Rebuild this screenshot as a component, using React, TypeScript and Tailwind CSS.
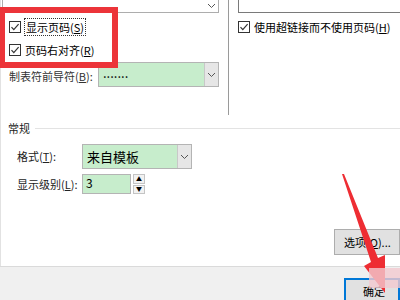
import React from 'react';

const font = { fontFamily: '"Microsoft YaHei UI", "Noto Sans CJK SC", "Noto Sans", sans-serif' };

function Check() {
  return (
    <svg width="12" height="12" viewBox="0 0 12 12" className="shrink-0">
      <rect x="0.5" y="0.5" width="11" height="11" fill="#fff" stroke="#333" />
      <path d="M2.5 6.2 L4.8 8.6 L9.6 3.2" fill="none" stroke="#333" strokeWidth="1.2" />
    </svg>
  );
}

function Chevron() {
  return (
    <svg width="9" height="6" viewBox="0 0 9 6">
      <path d="M1 1 L4.5 4.5 L8 1" fill="none" stroke="#555" strokeWidth="1" />
    </svg>
  );
}

function GreenCombo({ width, text, small }: { width: string; text: string; small?: boolean }) {
  return (
    <div className={`flex h-[25px] border border-[#b4b4b4] bg-[#c7edcc] ${width}`}>
      <div className={`flex flex-1 items-center whitespace-nowrap pl-[4px] text-[13px] text-black ${small ? 'pb-[4px]' : ''}`}>{text}</div>
      <div className="flex w-[14px] items-center justify-center border-l border-[#c8c8c8] bg-[#e6e6e6]">
        <Chevron />
      </div>
    </div>
  );
}

export default function App() {
  return (
    <div className="relative h-[300px] w-[400px] overflow-hidden whitespace-nowrap bg-white text-[11px] text-black" style={font}>
      <div className="flex h-[266px] flex-col border-l border-[#e2e2e2]">
        {/* top panes */}
        <div className="flex h-[115px]">
          <div className="flex w-[228px] shrink-0 flex-col border-r border-[#9a9a9a] pl-[1px]">
            <div className="flex h-[13px] w-[217px] justify-end border-x border-b border-[#adadad]">
              <div className="flex w-[14px] items-start justify-center pt-[3px]">
                <Chevron />
              </div>
            </div>
            <div className="mt-[4px] flex h-[19px] items-center gap-[3px] pl-[7px]">
              <Check />
              <span className="border border-dotted border-[#333] px-[1px] leading-[16px]">
                显示页码(<span className="underline">S</span>)
              </span>
            </div>
            <div className="mt-[4px] flex h-[19px] items-center gap-[4px] pl-[7px]">
              <Check />
              <span className="leading-[16px]">
                页码右对齐(<span className="underline">R</span>)
              </span>
            </div>
            <div className="mt-[3px] flex items-center pl-[7px]">
              <span className="w-[89px] pt-[3px] text-[#333]">
                制表符前导符(<span className="underline">B</span>):
              </span>
              <GreenCombo width="w-[121px]" text="......." small />
            </div>
          </div>
          <div className="flex flex-1 flex-col pl-[9px]">
            <div className="h-[13px] border-b border-l border-[#7a7a7a]" />
            <div className="mt-[8px] flex h-[12px] items-center gap-[4px]">
              <Check />
              <span className="leading-[14px]">
                使用超链接而不使用页码(<span className="underline">H</span>)
              </span>
            </div>
          </div>
        </div>

        {/* 常规 group */}
        <div className="mt-[3px] flex h-[20px] items-center pl-[7px]">
          <span className="text-[#222]">常规</span>
          <div className="ml-[5px] h-px flex-1 bg-[#e3e3e3]" />
        </div>
        <div className="mt-[6px] flex items-center pl-[16px]">
          <span className="w-[65px] text-[#222]">
            格式(<span className="underline">T</span>):
          </span>
          <GreenCombo width="w-[110px]" text="来自模板" />
        </div>
        <div className="mt-[5px] flex items-center pl-[16px]">
          <span className="w-[65px] text-[#222]">
            显示级别(<span className="underline">L</span>):
          </span>
          <div className="flex h-[20px] gap-[2px]">
            <div className="w-[49px] border border-[#b4b4b4] bg-[#c7edcc] pl-[3px] text-[12px] leading-[16px]">3</div>
            <div className="flex w-[12px] flex-col gap-px">
              <div className="flex flex-1 items-center justify-center border border-[#c4c4c4] bg-[#f2f2f2] text-[6px] leading-none">▲</div>
              <div className="flex flex-1 items-center justify-center border border-[#c4c4c4] bg-[#f2f2f2] text-[6px] leading-none">▼</div>
            </div>
          </div>
        </div>

        <div className="mt-[35px] flex justify-end">
          <div className="flex h-[26px] w-[66px] items-center border border-[#adadad] bg-[#e1e1e1] pl-[9px]">
            选项(<span className="underline">O</span>)...
          </div>
        </div>
      </div>

      {/* bottom bar */}
      <div className="flex h-[34px] justify-end border-t border-[#dadada] bg-[#f0f0f0] pt-[11px]">
        <div className="flex h-[24px] w-[56px] items-start border-2 border-[#0078d7] bg-[#e1e1e1] pl-[17px] pt-[3px]">
          确定
        </div>
      </div>

      {/* annotations */}
      <div className="absolute left-[-1px] top-[7px] h-[61px] w-[119px] border-[6px] border-[#ec3439]" />
      <svg className="absolute left-0 top-0" width="400" height="300" viewBox="0 0 400 300">
        <polygon points="342,174 344,174 378,258 385,255 385,293 364,266 371,262" fill="#ee2d33" />
      </svg>
      <div className="absolute left-[369px] top-[268px] h-[20px] w-[31px] bg-[#f3c9cf] opacity-80" />
    </div>
  );
}
